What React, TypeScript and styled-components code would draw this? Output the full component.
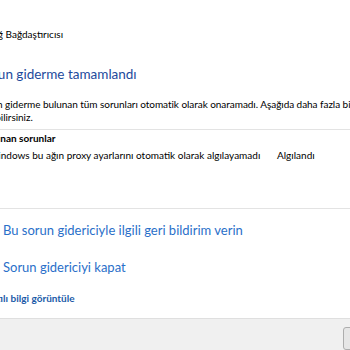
import styled, { createGlobalStyle } from "styled-components";

const GlobalStyle = createGlobalStyle`
  html, body {
    margin: 0;
    padding: 0;
    background: #ffffff;
    overflow: hidden;
  }
  body {
    font-family: Lato, "Open Sans", "DejaVu Sans", sans-serif;
    color: #000000;
  }
`;

const Dialog = styled.div`
  width: 350px;
  height: 350px;
  display: flex;
  flex-direction: column;
  background: #ffffff;
  overflow: hidden;
`;

const Main = styled.div`
  flex: 1;
  display: flex;
  flex-direction: column;
  margin-left: -23px;
`;

const Title = styled.div`
  margin: 26px 0 0 14px;
  font-size: 10px;
  line-height: 16px;
  white-space: nowrap;
`;

const Heading = styled.div`
  margin: 22px 0 0 1px;
  font-size: 13.5px;
  line-height: 20px;
  color: #1d4a9c;
  white-space: nowrap;
`;

const Body = styled.div`
  margin-top: 14px;
  font-size: 10px;
  line-height: 13px;
  letter-spacing: -0.05px;
  width: 400px;
`;

const Separator = styled.div<{ $top: number }>`
  height: 1px;
  background: #e3e3e3;
  margin-top: ${(p) => p.$top}px;
  width: 420px;
`;

const TableHead = styled.div`
  margin: 1px 0 0 3px;
  font-size: 10px;
  line-height: 14px;
  font-weight: 700;
  white-space: nowrap;
`;

const Row = styled.div`
  margin-top: 3px;
  display: grid;
  grid-template-columns: 300px auto;
  align-items: center;
  font-size: 10px;
  line-height: 14px;
  white-space: nowrap;
`;

const Problem = styled.span`
  display: flex;
  align-items: center;
  gap: 2px;
`;

const WarnIcon = styled.svg`
  width: 9px;
  height: 9px;
  flex: none;
`;

const Link = styled.a<{ $top: number }>`
  margin-top: ${(p) => p.$top}px;
  padding-left: 6px;
  display: flex;
  align-items: center;
  gap: 6px;
  font-size: 13px;
  line-height: 18px;
  color: #2a6fc9;
  white-space: nowrap;
  text-decoration: none;
`;

const ArrowIcon = styled.svg`
  width: 14px;
  height: 14px;
  flex: none;
`;

const SmallLink = styled.a`
  margin: 15px 0 0 -4px;
  font-size: 10px;
  line-height: 14px;
  font-weight: 700;
  color: #1a5aa8;
  white-space: nowrap;
  text-decoration: none;
`;

const Footer = styled.div`
  height: 32px;
  flex: none;
  background: #f0f0f0;
  border-top: 1px solid #dfdfdf;
  display: flex;
  padding: 8px 0 0 343px;
  box-sizing: border-box;
`;

const Button = styled.button`
  width: 75px;
  height: 23px;
  flex: none;
  border: 1px solid #adadad;
  border-radius: 3px;
  background: #e6e6e6;
  font-family: inherit;
  font-size: 10px;
`;

function Arrow() {
  return (
    <ArrowIcon viewBox="0 0 14 14">
      <path d="M2 7h9M7 3l4 4-4 4" stroke="#2e9a2e" strokeWidth="2" fill="none" />
    </ArrowIcon>
  );
}

function Warning() {
  return (
    <WarnIcon viewBox="0 0 10 10">
      <path d="M5 1l4 8H1z" fill="#f2c200" />
    </WarnIcon>
  );
}

export default function App() {
  return (
    <>
      <GlobalStyle />
      <Dialog>
        <Main>
          <Title>Ağ Bağdaştırıcısı</Title>
          <Heading>Sorun giderme tamamlandı</Heading>
          <Body>
            Sorun giderme bulunan tüm sorunları otomatik olarak onaramadı. Aşağıda daha fazla bilgi
            bulabilirsiniz.
          </Body>
          <Separator $top={5} />
          <TableHead>Bulunan sorunlar</TableHead>
          <Row>
            <Problem>
              <Warning />
              Windows bu ağın proxy ayarlarını otomatik olarak algılayamadı
            </Problem>
            <span>Algılandı</span>
          </Row>
          <Separator $top={46} />
          <Link $top={12}>
            <Arrow />
            Bu sorun gidericiyle ilgili geri bildirim verin
          </Link>
          <Link $top={19}>
            <Arrow />
            Sorun gidericiyi kapat
          </Link>
          <SmallLink>Ayrıntılı bilgi görüntüle</SmallLink>
        </Main>
        <Footer>
          <Button>Kapat</Button>
        </Footer>
      </Dialog>
    </>
  );
}
